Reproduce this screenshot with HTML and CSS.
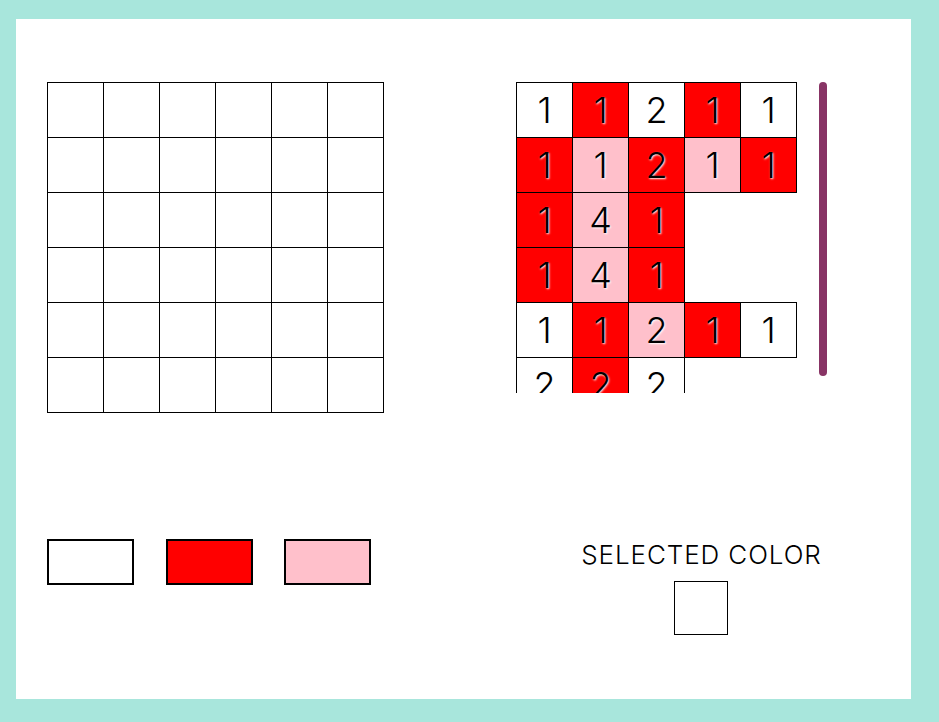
FILE: index.html
```html
<!DOCTYPE html>
<html lang="en">
<head>
<meta charset="utf-8">
<title>Pixel Painter</title>
<link rel="stylesheet" href="styles.css">
</head>
<body>
<main class="card">
  <section class="board">
    <div class="cell"></div><div class="cell"></div><div class="cell"></div><div class="cell"></div><div class="cell"></div><div class="cell"></div>
    <div class="cell"></div><div class="cell"></div><div class="cell"></div><div class="cell"></div><div class="cell"></div><div class="cell"></div>
    <div class="cell"></div><div class="cell"></div><div class="cell"></div><div class="cell"></div><div class="cell"></div><div class="cell"></div>
    <div class="cell"></div><div class="cell"></div><div class="cell"></div><div class="cell"></div><div class="cell"></div><div class="cell"></div>
    <div class="cell"></div><div class="cell"></div><div class="cell"></div><div class="cell"></div><div class="cell"></div><div class="cell"></div>
    <div class="cell"></div><div class="cell"></div><div class="cell"></div><div class="cell"></div><div class="cell"></div><div class="cell"></div>
  </section>

  <section class="pattern">
    <div class="pattern-list">
      <div class="prow"><span class="pc white">1</span><span class="pc red">1</span><span class="pc white">2</span><span class="pc red">1</span><span class="pc white">1</span></div>
      <div class="prow"><span class="pc red">1</span><span class="pc pink">1</span><span class="pc red">2</span><span class="pc pink">1</span><span class="pc red">1</span></div>
      <div class="prow"><span class="pc red">1</span><span class="pc pink">4</span><span class="pc red">1</span></div>
      <div class="prow"><span class="pc red">1</span><span class="pc pink">4</span><span class="pc red">1</span></div>
      <div class="prow"><span class="pc white">1</span><span class="pc red">1</span><span class="pc pink">2</span><span class="pc red">1</span><span class="pc white">1</span></div>
      <div class="prow"><span class="pc white">2</span><span class="pc red">2</span><span class="pc white">2</span></div>
    </div>
    <div class="scroll-thumb" aria-hidden="true"></div>
  </section>

  <section class="palette">
    <button class="swatch white" aria-label="white"></button>
    <button class="swatch red" aria-label="red"></button>
    <button class="swatch pink" aria-label="pink"></button>
  </section>

  <section class="selected">
    <h2 class="selected-label">SELECTED COLOR</h2>
    <div class="selected-box"></div>
  </section>
</main>
</body>
</html>
```

FILE: styles.css
```css
html, body {
  margin: 0;
  padding: 0;
}

body {
  background: #a8e6dc;
  padding: 19px 28px 23px 16px;
  font-family: Inter, Lato, "Noto Sans", sans-serif;
  color: #000;
}

.card {
  background: #fff;
  height: 680px;
  box-sizing: border-box;
  padding: 63px 25px 0 31px;
  display: grid;
  grid-template-columns: 337px 370px;
  grid-template-rows: auto auto;
  align-content: start;
  column-gap: 132px;
  row-gap: 126px;
  align-items: start;
}

.board {
  display: grid;
  grid-template-columns: repeat(6, 56px);
  grid-auto-rows: 55px;
  border-top: 1px solid #000;
  border-left: 1px solid #000;
  width: max-content;
}

.cell {
  border-right: 1px solid #000;
  border-bottom: 1px solid #000;
  background: #fff;
}

.pattern {
  width: 312px;
  display: flex;
  justify-content: space-between;
  align-items: flex-start;
}

.pattern-list {
  width: 290px;
  height: 311px;
  overflow-y: auto;
  scrollbar-width: none;
}

.pattern-list::-webkit-scrollbar {
  display: none;
}

.scroll-thumb {
  width: 8px;
  height: 294px;
  margin-right: 1px;
  background: #883465;
  border-radius: 4px;
}

.prow {
  display: flex;
}

.pc {
  box-sizing: border-box;
  flex: none;
  width: 57px;
  height: 56px;
  border: 1px solid #000;
  margin: 0 -1px -1px 0;
  display: flex;
  align-items: center;
  justify-content: center;
  font-size: 36px;
  font-weight: 300;
  line-height: 1;
  text-shadow: 1px 1px 2px #fff;
}

.white { background: #fff; }
.red { background: #ff0000; }
.pink { background: #ffc0cb; }

.palette {
  display: flex;
  gap: 31.5px;
}

.swatch {
  width: 87px;
  height: 46px;
  border: 2px solid #000;
  padding: 0;
  margin: 0;
  box-sizing: border-box;
}

.selected {
  display: flex;
  flex-direction: column;
  align-items: center;
}

.selected-label {
  margin: 0 0 10px;
  padding-left: 0.9px;
  font-size: 26px;
  line-height: 32px;
  font-weight: 300;
  letter-spacing: 0.9px;
  white-space: nowrap;
}

.selected-box {
  width: 54px;
  height: 54px;
  box-sizing: border-box;
  border: 1px solid #000;
  background: #fff;
}
```
